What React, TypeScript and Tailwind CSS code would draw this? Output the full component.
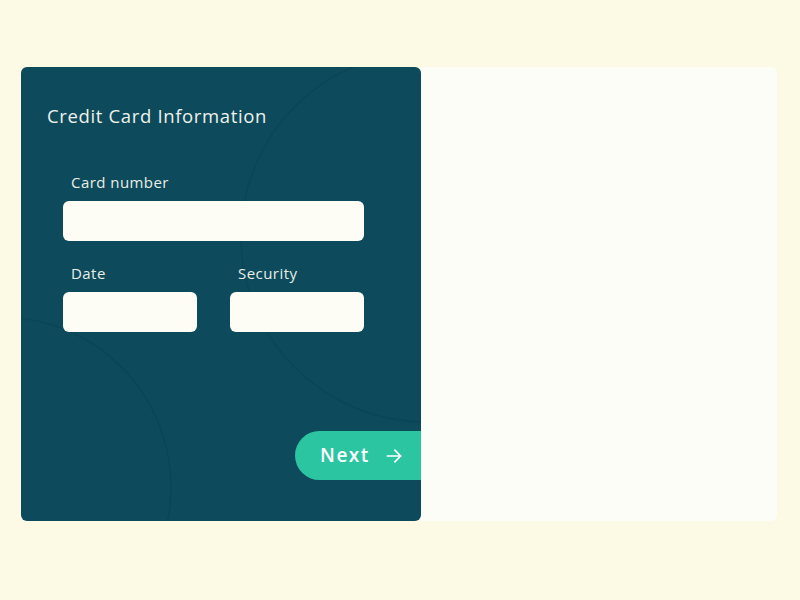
const Field = ({ label, className }: { label: string; className?: string }) => {
  return (
    <div className={className}>
      <label className="block pl-2 text-[15px] leading-5 tracking-[0.03em] text-[#e9eee6]">
        {label}
      </label>
      <input
        type="text"
        className="mt-[9px] block h-10 w-full rounded-md bg-[#fdfdf5] outline-none"
      />
    </div>
  );
};

const App = () => {
  return (
    <div
      className="flex h-[600px] w-[800px] bg-[#fcf9e4] pt-[67px] pl-[21px]"
      style={{ fontFamily: '"Open Sans", "DejaVu Sans", sans-serif' }}
    >
      <div className="flex h-[454px] w-[756px]">
        <div className="relative h-full w-[400px] overflow-hidden rounded-md bg-[#0d4a5c]">
          {/* faint background circles */}
          <svg
            className="absolute inset-0"
            width="400"
            height="454"
            viewBox="0 0 400 454"
            fill="none"
          >
            <circle cx="405" cy="170" r="185" stroke="#0b4657" strokeWidth="1.5" />
            <circle cx="-20" cy="420" r="170" stroke="#0b4657" strokeWidth="1.5" />
          </svg>

          <div className="relative flex h-full flex-col">
            <h1 className="pt-[37px] pl-[26px] text-[18.5px] leading-6 tracking-[0.035em] text-[#eef2ea]">
              Credit Card Information
            </h1>

            <form className="mt-[44px] pl-[42px] pr-[57px]">
              <Field label="Card number" />
              <div className="mt-[22px] flex gap-[33px]">
                <Field label="Date" className="w-[134px]" />
                <Field label="Security" className="w-[134px]" />
              </div>
            </form>

            <div className="mt-auto mb-[41px] flex justify-end">
              <button
                type="button"
                className="flex h-[49px] w-[126px] items-center gap-[14px] rounded-l-full bg-[#2cc5a2] pl-[25px] text-[19px] font-semibold tracking-[0.08em] text-white"
              >
                Next
                <svg
                  width="20"
                  height="20"
                  viewBox="0 0 24 24"
                  fill="none"
                  stroke="currentColor"
                  strokeWidth="2"
                  strokeLinecap="round"
                  strokeLinejoin="round"
                >
                  <path d="M4 12h16" />
                  <path d="M13 5l7 7-7 7" />
                </svg>
              </button>
            </div>
          </div>
        </div>

        <div className="h-full flex-1 rounded-r-md bg-[#fdfdf7]" />
      </div>
    </div>
  );
};

export default App;
